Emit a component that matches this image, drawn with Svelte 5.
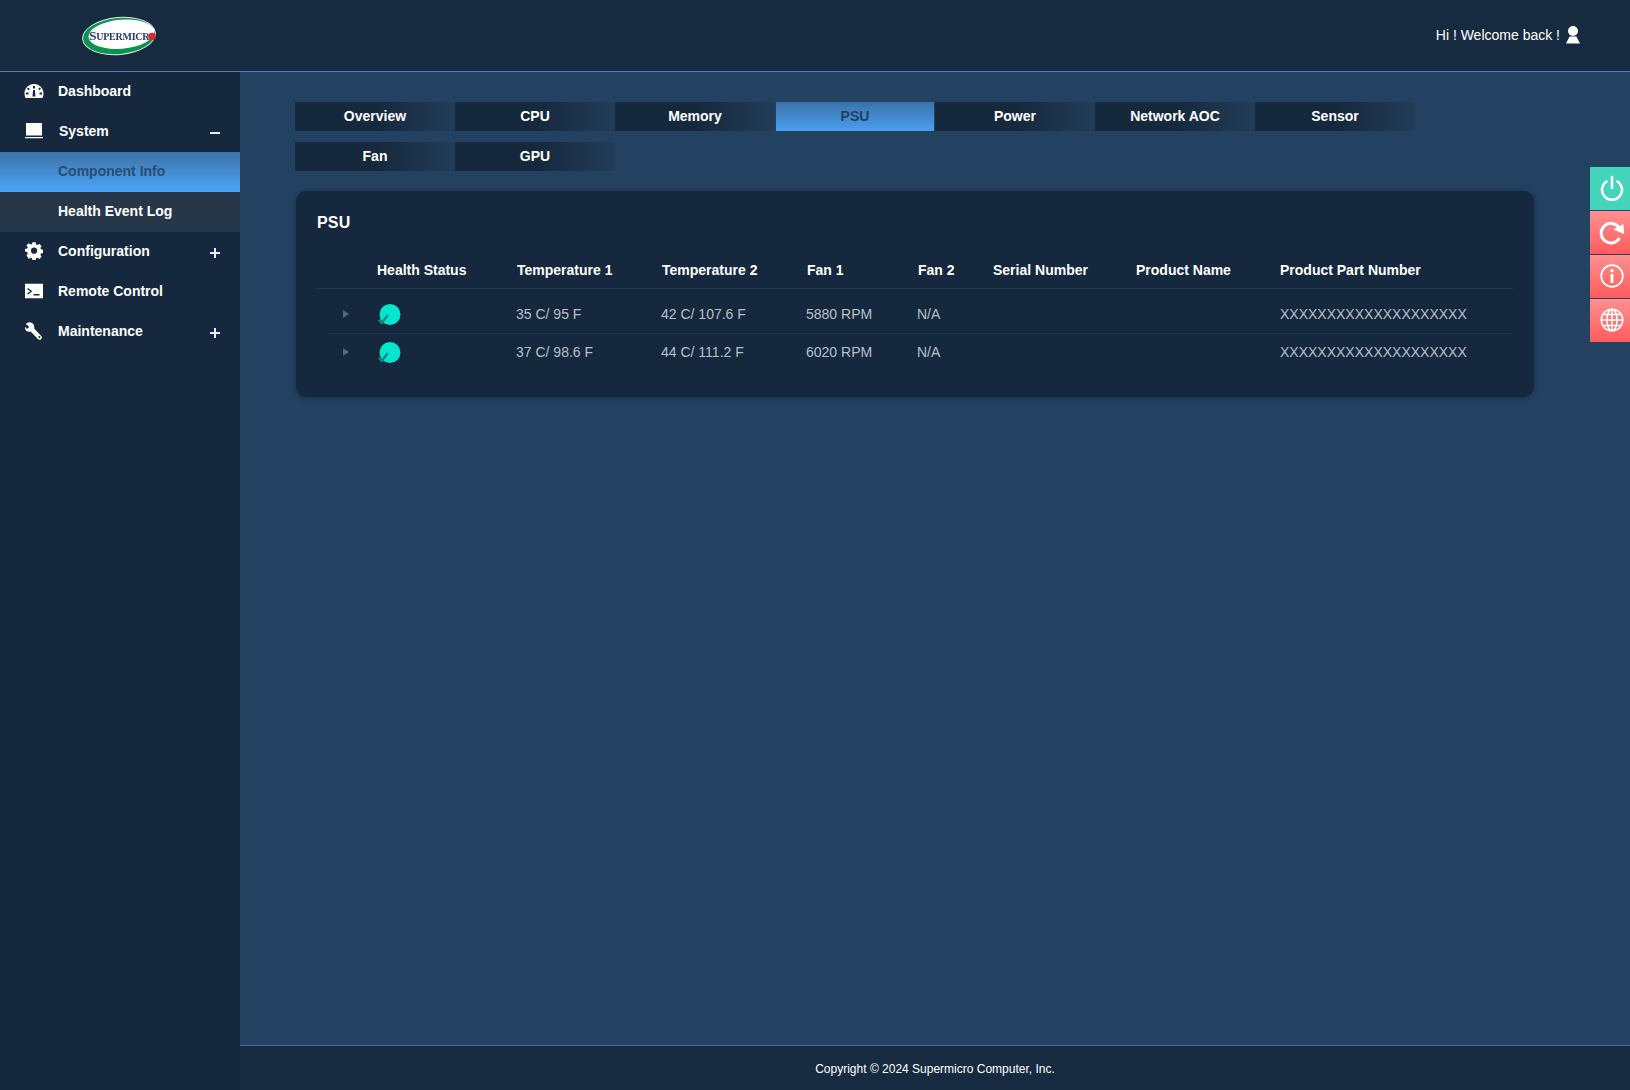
<script>
  const tabs = ['Overview','CPU','Memory','PSU','Power','Network AOC','Sensor','Fan','GPU'];
  const cols = ['', 'Health Status','Temperature 1','Temperature 2','Fan 1','Fan 2','Serial Number','Product Name','Product Part Number'];
  const rows = [
    ['35 C/ 95 F','42 C/ 107.6 F','5880 RPM','N/A','','','XXXXXXXXXXXXXXXXXXXX'],
    ['37 C/ 98.6 F','44 C/ 111.2 F','6020 RPM','N/A','','','XXXXXXXXXXXXXXXXXXXX']
  ];
</script>

<div class="page">
  <header class="top">
    <svg class="logo" width="78" height="42" viewBox="0 0 78 42">
      <g transform="rotate(-5 38 21)">
        <ellipse cx="38" cy="21" rx="37" ry="19" fill="#dfe9e4"/>
        <ellipse cx="38" cy="21" rx="36" ry="18" fill="#0a9350"/>
        <ellipse cx="40.500" cy="19.500" rx="33" ry="14.500" fill="#fff"/>
      </g>
      <text x="8" y="25" class="logotext"><tspan class="big">S</tspan>UPERMICR</text>
      <circle cx="71" cy="21.500" r="3.800" fill="#e3262a"/>
    </svg>
    <div class="welcome">
      <span>Hi ! Welcome back !</span>
      <svg width="14" height="18" viewBox="0 0 14 18"><circle cx="7" cy="5" r="5" fill="#fff"/><path d="M3.600 10.400h6.800L14 17.500H0z" fill="#fff"/></svg>
    </div>
  </header>
  <div class="middle">
    <nav class="side">
      <div class="item">
        <svg class="ico gauge" width="20" height="16" viewBox="0 0 20 16"><path fill="#fff" fill-rule="evenodd" d="M10 1C4.500 1 .5 5.300.5 10.500c0 1.700.4 3.200 1.100 4.500h16.800c.7-1.300 1.100-2.800 1.100-4.500C19.500 5.300 15.500 1 10 1zM9 3h2v2.500H9zM4.300 4.500l1.500 1.500-1.300 1.300L3 5.800zm11.400 0L17 5.800 15.500 7.300 14.200 6zM2 9.500h2.500v2H2zm13.500 0H18v2h-2.500zM9.100 7h1.800l.6 6.500h-3z"/></svg>
        <span>Dashboard</span>
      </div>
      <div class="item">
        <svg class="ico" width="18" height="16" viewBox="0 0 18 16"><path fill="#fff" d="M1 0h16v12.500H1zM0 14h18v1.200H0z"/></svg>
        <span class="sys">System</span><b class="sign"></b>
      </div>
      <div class="item sub active"><span>Component Info</span></div>
      <div class="item sub"><span>Health Event Log</span></div>
      <div class="item">
        <svg class="ico" width="18" height="18" viewBox="0 0 18 18"><path fill="#fff" fill-rule="evenodd" d="M7.300 0h3.400l.5 2.400 1.500.6 2-1.300 2.400 2.400-1.300 2 .6 1.500 2.400.5v3.400l-2.400.5-.6 1.500 1.300 2-2.400 2.400-2-1.300-1.500.6-.5 2.400H7.300l-.5-2.400-1.500-.6-2 1.300L.9 14l1.300-2-.6-1.500L-.8 10V7.300l2.400-.5.6-1.500-1.300-2L3.300 1l2 1.300 1.500-.6zM9 5.700a3.300 3.300 0 1 0 0 6.600 3.300 3.300 0 0 0 0-6.600z" transform="translate(.7 .3) scale(.93)"/></svg>
        <span>Configuration</span><b class="sign plus"></b>
      </div>
      <div class="item">
        <svg class="ico" width="18" height="15" viewBox="0 0 18 15"><path fill="#fff" fill-rule="evenodd" d="M0 0h18v15H0zM3 4.500l-.9 1L5.300 7.800 2.100 10l.9 1 4.300-3.200zM8.500 10.500V12h6v-1.500z"/></svg>
        <span>Remote Control</span>
      </div>
      <div class="item">
        <svg class="ico" width="18" height="18" viewBox="0 0 18 18"><path fill="#fff" fill-rule="evenodd" d="M5.500.4C3.500 0 1.400.9.900 2.200l3 2.100-.4 1.800-1.800.7L.2 4.800C-.5 7.200.9 9.500 3.400 9.800c.8.100 1.600 0 2.200-.2l7.300 7.400c1 1 2.700 1 3.400.1.800-.9.800-2.200-.1-3.100L9.200 6.400C9.600 3.300 8.400.9 5.500.4zM14.400 14a1 1 0 1 1 0 2 1 1 0 0 1 0-2z"/></svg>
        <span>Maintenance</span><b class="sign plus"></b>
      </div>
    </nav>
    <div class="column">
      <main class="content">
        <div class="tabs">
          {#each tabs as t}
            <div class="tab" class:on={t === 'PSU'}>{t}</div>
          {/each}
        </div>
        <section class="card">
          <h2>PSU</h2>
          <div class="row head">
            {#each cols as c}<div>{c}</div>{/each}
          </div>
          {#each rows as r, i}
            <div class="row body" class:second={i === 1}>
              <div class="arrow"><i></i></div>
              <div class="health">
                <svg width="26" height="30" viewBox="0 0 26 30">
                  <circle cx="13" cy="15.500" r="10.500" fill="#03e6cd"/>
                  <path d="M1.800 20.800l3 3.200 6-8" fill="none" stroke="#0c8a80" stroke-width="2.200"/>
                </svg>
              </div>
              {#each r as v}<div>{v}</div>{/each}
            </div>
          {/each}
        </section>
      </main>
      <footer class="foot">Copyright © 2024 Supermicro Computer, Inc.</footer>
    </div>
  </div>

  <aside class="actions">
    <div class="act green">
      <svg width="26" height="26" viewBox="0 0 26 26" fill="none" stroke="#fff" stroke-width="2.600" stroke-linecap="round"><path d="M13 2v11"/><path d="M7.500 6.500a10 10 0 1 0 11 0"/></svg>
    </div>
    <div class="act">
      <svg width="26" height="26" viewBox="0 0 26 26" fill="none"><path d="M20 8.500A9.800 9.800 0 1 0 20.500 19" stroke="#fff" stroke-width="3"/><path d="M25 15L14 10.500 24.500 5z" fill="#fff"/></svg>
    </div>
    <div class="act">
      <svg width="26" height="26" viewBox="0 0 26 26" fill="none"><circle cx="13" cy="13" r="10.800" stroke="#fff" stroke-width="1.800"/><circle cx="13" cy="7.800" r="1.700" fill="#fff"/><path d="M13 11v9" stroke="#fff" stroke-width="2.800"/></svg>
    </div>
    <div class="act">
      <svg width="26" height="26" viewBox="0 0 26 26" fill="none" stroke="#fff" stroke-width="1.500"><circle cx="13" cy="13" r="10.800"/><ellipse cx="13" cy="13" rx="5" ry="10.800"/><path d="M13 2v22M2.200 13h21.600M4 7.500h18M4 18.500h18"/></svg>
    </div>
  </aside>
</div>

<style>
  :global(body) { margin: 0; background: #234261; }
  .page {
    position: relative;
    width: 1630px;
    height: 1090px;
    display: flex;
    flex-direction: column;
    overflow: hidden;
    background: #234261;
    font-family: "Liberation Sans", Arial, sans-serif;
    color: #fff;
  }
  .top {
    height: 71px;
    flex: none;
    background: #172b40;
    border-bottom: 1px solid #4d80b8;
    display: flex;
    align-items: center;
    justify-content: space-between;
    padding: 0 50px 0 81px;
  }
  .logo { display: block; filter: blur(.35px); }
  .logotext {
    font-family: "Liberation Serif", serif;
    font-size: 10px;
    font-weight: 700;
    fill: #24386e;
    letter-spacing: -.25px;
  }
  .big { font-size: 13.500px; }
  .welcome {
    display: flex;
    align-items: center;
    gap: 6px;
    font-size: 14px;
    margin-top: -1px;
  }
  .middle { flex: 1; display: flex; min-height: 0; }
  .side { width: 240px; flex: none; background: #15283d; }
  .column { flex: 1; min-width: 0; display: flex; flex-direction: column; }
  .item {
    height: 40px;
    box-sizing: border-box;
    padding: 0 0 2px 58px;
    display: flex;
    align-items: center;
    position: relative;
    font-size: 14px;
    font-weight: 700;
  }
  .ico { position: absolute; left: 25px; top: calc(50% - 1px); transform: translateY(-50%); }
  .gauge { left: 24px; }
  .sys { margin-left: 1px; }
  .sub { background: #253748; }
  .active { background: linear-gradient(#3d72a6, #4ba5fb); color: #2a4d70; }
  .sign { position: absolute; left: 210px; top: 20px; width: 10px; height: 1.500px; background: #e8edf2; }
  .plus::after {
    content: "";
    position: absolute;
    left: 4.250px;
    top: -4.250px;
    width: 1.500px;
    height: 10px;
    background: #e8edf2;
  }
  .content { flex: 1; padding: 30px 96px 0 55px; min-width: 0; }
  .tabs { display: flex; flex-wrap: wrap; gap: 11px 0; width: 1130px; }
  .tab {
    width: 160px;
    height: 29px;
    line-height: 29px;
    text-align: center;
    font-size: 14px;
    font-weight: 700;
    background: linear-gradient(90deg, #15283c 50%, #223d58);
  }
  .tab.on {
    background: linear-gradient(#3b72a9, #4a9fef);
    color: #20405f;
    width: 158px;
    margin: 0 1px;
  }
  .card {
    margin: 20px 0 0 1px;
    width: 1238px;
    height: 206px;
    box-sizing: border-box;
    background: #15283d;
    border-radius: 10px;
    box-shadow: 0 1px 6px rgba(10,25,40,.45);
    padding: 23px 21px 0;
  }
  h2 { margin: 0; font-size: 16px; line-height: 18px; font-weight: 700; letter-spacing: .2px; }
  .row {
    display: grid;
    grid-template-columns: 60px 140px 145px 145px 111px 75px 144px 144px 1fr;
    align-items: center;
    position: relative;
  }
  .head {
    margin-top: 20px;
    height: 37px;
    font-size: 14px;
    font-weight: 700;
    border-bottom: 1px solid #1e3650;
    box-sizing: border-box;
    white-space: nowrap;
  }
  .head > div:nth-child(n+8) { margin-left: -1px; }
  .body {
    height: 45px;
    box-sizing: border-box;
    padding-top: 4px;
    font-size: 14px;
    color: #b9c0c7;
    white-space: nowrap;
  }
  .body > div:nth-child(n+3) { margin-left: -1px; }
  .body > div:nth-child(7) { margin-left: 0; }
  .body::after {
    content: "";
    position: absolute;
    left: 10px;
    right: 0;
    bottom: 0;
    height: 1px;
    background: #1e3650;
  }
  .body.second { height: 36px; padding-top: 0; }
  .body.second::after { display: none; }
  .arrow i {
    display: block;
    margin-left: 26px;
    width: 0;
    height: 0;
    border-left: 6px solid #5b6670;
    border-top: 4px solid transparent;
    border-bottom: 4px solid transparent;
  }
  .health svg { display: block; }
  .foot {
    height: 45px;
    flex: none;
    background: #172b40;
    border-top: 1px solid #3b6ea6;
    box-sizing: border-box;
    font-size: 12px;
    text-align: center;
    line-height: 46px;
  }
  .actions {
    position: absolute;
    right: 0;
    top: 167px;
    width: 40px;
    display: flex;
    flex-direction: column;
    gap: 1px;
  }
  .act {
    height: 43px;
    padding: 0 0 1px 4px;
    background: linear-gradient(#ff9090, #ff5c5c);
    display: flex;
    align-items: center;
    justify-content: center;
    box-sizing: border-box;
  }
  .act.green { background: #44d4bb; }
</style>
